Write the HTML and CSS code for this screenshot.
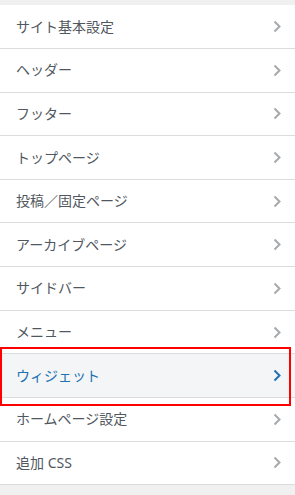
FILE: index.html
```html
<!DOCTYPE html>
<html lang="ja">
<head>
<meta charset="utf-8">
<title>カスタマイズ</title>
<link rel="stylesheet" href="styles.css">
</head>
<body>
<div class="panel">
  <ul class="sections">
    <li class="section"><span class="title">サイト基本設定</span><svg class="chev" width="8" height="13" viewBox="0 0 8 13"><polyline points="1.5,1.5 6.5,6.5 1.5,11.5"/></svg></li>
    <li class="section"><span class="title">ヘッダー</span><svg class="chev" width="8" height="13" viewBox="0 0 8 13"><polyline points="1.5,1.5 6.5,6.5 1.5,11.5"/></svg></li>
    <li class="section"><span class="title">フッター</span><svg class="chev" width="8" height="13" viewBox="0 0 8 13"><polyline points="1.5,1.5 6.5,6.5 1.5,11.5"/></svg></li>
    <li class="section"><span class="title">トップページ</span><svg class="chev" width="8" height="13" viewBox="0 0 8 13"><polyline points="1.5,1.5 6.5,6.5 1.5,11.5"/></svg></li>
    <li class="section"><span class="title">投稿／固定ページ</span><svg class="chev" width="8" height="13" viewBox="0 0 8 13"><polyline points="1.5,1.5 6.5,6.5 1.5,11.5"/></svg></li>
    <li class="section"><span class="title">アーカイブページ</span><svg class="chev" width="8" height="13" viewBox="0 0 8 13"><polyline points="1.5,1.5 6.5,6.5 1.5,11.5"/></svg></li>
    <li class="section"><span class="title">サイドバー</span><svg class="chev" width="8" height="13" viewBox="0 0 8 13"><polyline points="1.5,1.5 6.5,6.5 1.5,11.5"/></svg></li>
    <li class="section"><span class="title">メニュー</span><svg class="chev" width="8" height="13" viewBox="0 0 8 13"><polyline points="1.5,1.5 6.5,6.5 1.5,11.5"/></svg></li>
    <li class="section section--active"><span class="title">ウィジェット</span><svg class="chev" width="8" height="13" viewBox="0 0 8 13"><polyline points="1.5,1.5 6.5,6.5 1.5,11.5"/></svg></li>
    <li class="section"><span class="title">ホームページ設定</span><svg class="chev" width="8" height="13" viewBox="0 0 8 13"><polyline points="1.5,1.5 6.5,6.5 1.5,11.5"/></svg></li>
    <li class="section"><span class="title">追加 CSS</span><svg class="chev" width="8" height="13" viewBox="0 0 8 13"><polyline points="1.5,1.5 6.5,6.5 1.5,11.5"/></svg></li>
  </ul>
  <div class="highlight"></div>
</div>
</body>
</html>
```
FILE: styles.css
```css
html, body {
  margin: 0;
  padding: 0;
}
body {
  background: #f0f0f1;
  font-family: "Noto Sans", "Noto Sans CJK JP", sans-serif;
  width: 295px;
  height: 495px;
  overflow: hidden;
}
.panel {
  position: relative;
  height: 100%;
}
.sections {
  list-style: none;
  margin: 0;
  padding: 5.36px 0 0;
}
.section {
  box-sizing: border-box;
  height: 43.64px;
  border-bottom: 1px solid #dcdcde;
  background: #fff;
  display: flex;
  align-items: center;
  justify-content: space-between;
  padding: 0 14px 0 16px;
  color: #50575e;
  font-size: 14px;
}
.title {
  line-height: 20px;
}
.chev {
  display: block;
  fill: none;
  stroke: #a7aaad;
  stroke-width: 2;
}
.section--active {
  background: #f3f5f6;
  border-top: 1px solid #dcdcde;
  margin-top: -1px;
  height: 44.64px;
  color: #2271b1;
}
.section--active .chev {
  stroke: #2271b1;
}
.highlight {
  position: absolute;
  left: 0;
  top: 347px;
  width: 291px;
  height: 59px;
  box-sizing: border-box;
  border: 2px solid #f00;
  pointer-events: none;
}
```
